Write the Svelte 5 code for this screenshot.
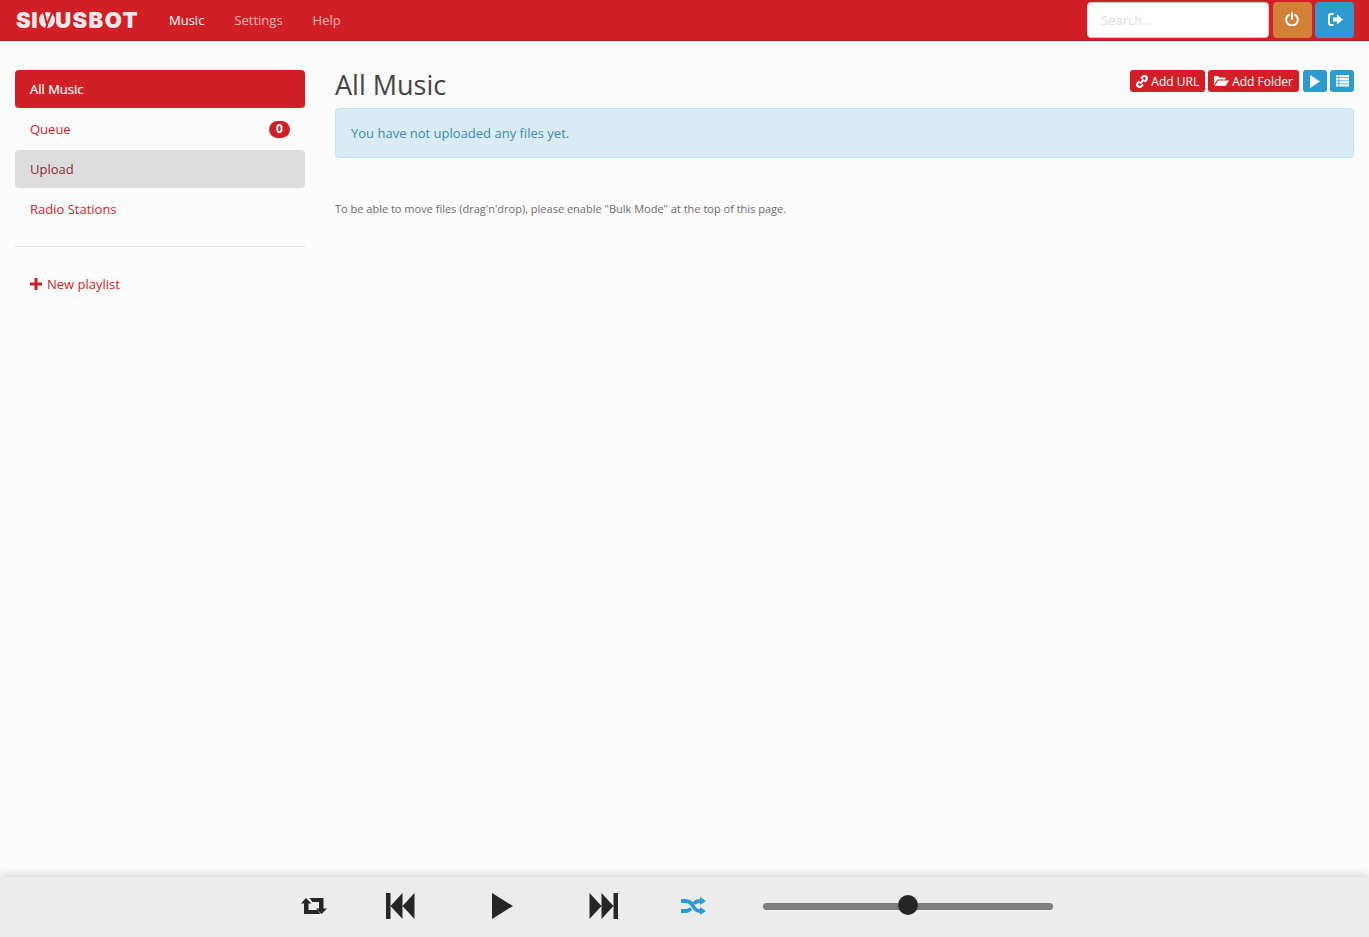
<script>
  const nav = ['Music', 'Settings', 'Help'];
</script>

<div class="page">
  <header class="navbar">
    <div class="logo"><span>SI</span><svg class="logo-n" width="16" height="16" viewBox="0 0 16 16" aria-hidden="true"><circle cx="8" cy="8" r="8" fill="#f8e8e9"/><path d="M4.500 -1 8 12.500 11.500 4.500 13.500 -1" fill="none" stroke="#d21f26" stroke-width="2"/><path d="M8 12.500 7 17" fill="none" stroke="#d21f26" stroke-width="2"/></svg><span class="rest">USBOT</span></div>
    <nav class="links">
      {#each nav as item, i}
        <span class:active={i === 0}>{item}</span>
      {/each}
    </nav>
    <div class="nav-right">
      <input class="search" placeholder="Search..." />
      <button class="nb orange" aria-label="Power">
        <svg class="ico-power" width="14" height="14" viewBox="0 0 14 14"><path d="M4 2.700A5.800 5.800 0 1 0 10 2.700" fill="none" stroke="#fff" stroke-width="2" stroke-linecap="round"/><path d="M7 1v6" stroke="#fff" stroke-width="2" stroke-linecap="round"/></svg>
      </button>
      <button class="nb blue" aria-label="Logout">
        <svg class="ico-out" width="15" height="13" viewBox="0 0 15 13"><path d="M5.500 1H3a2 2 0 0 0-2 2v7a2 2 0 0 0 2 2h2.500" fill="none" stroke="#fff" stroke-width="2"/><path d="M5 4.500H9V1.500l6 5-6 5V8.500H5z" fill="#fff"/></svg>
      </button>
    </div>
  </header>

  <div class="body">
    <aside class="side">
      <a class="item on">All Music</a>
      <a class="item">Queue <b class="badge">0</b></a>
      <a class="item hover">Upload</a>
      <a class="item">Radio Stations</a>
      <hr />
      <a class="new">
        <svg width="12" height="12" viewBox="0 0 12 12"><path d="M4.500 0h3v4.500H12v3H7.500V12h-3V7.500H0v-3h4.500z" fill="#d21f26"/></svg>
        New playlist
      </a>
    </aside>
    <main class="main">
      <div class="head">
        <h1>All Music</h1>
        <div class="tools">
          <button class="sb red">
            <svg width="12" height="13" viewBox="0 0 12 13"><path d="M5 3.500 6.800 1.700a2.300 2.300 0 0 1 3.400 3.300L8.500 6.700M7 9.500 5.200 11.300A2.300 2.300 0 0 1 1.800 8L3.500 6.300M4.300 8.700 7.700 4.300" fill="none" stroke="#fff" stroke-width="2.100"/></svg>
            Add URL
          </button>
          <button class="sb red">
            <svg width="15" height="12" viewBox="0 0 15 12"><path d="M0 10V2a1 1 0 0 1 1-1h3l1 1.500h5.500a1 1 0 0 1 1 1V4.500H3.500L0 10z" fill="#fff"/><path d="M4 5.500h11L11.500 11H.8z" fill="#fff"/></svg>
            Add Folder
          </button>
          <button class="sq blue first" aria-label="Play">
            <svg width="10" height="13" viewBox="0 0 10 13"><path d="M0 0l10 6.500L0 13z" fill="#fff"/></svg>
          </button>
          <button class="sq blue" aria-label="List">
            <svg width="13" height="12" viewBox="0 0 13 12"><path d="M0 0h2.500v2.300H0zM3.300 0H13v2.300H3.300zM0 3.100h2.500v2.300H0zM3.300 3.100H13v2.300H3.300zM0 6.200h2.500v2.300H0zM3.300 6.200H13v2.300H3.300zM0 9.300h2.500v2.300H0zM3.300 9.300H13v2.300H3.300z" fill="#fff"/></svg>
          </button>
        </div>
      </div>
      <div class="alert">You have not uploaded any files yet.</div>
      <p class="hint">To be able to move files (drag'n'drop), please enable "Bulk Mode" at the top of this page.</p>
    </main>
  </div>

  <footer class="player">
    <svg class="repeat" width="26" height="16" viewBox="0 0 26 16" aria-hidden="true"><path d="M5 0 10.500 5.500H7.500V12H16.500L19.500 16H3V5.500H0z" fill="#262626"/><path d="M8.500 0H22.500V10.500H26L20.500 16 15 10.500H18V4H11.500z" fill="#262626"/></svg>
    <svg class="prev" width="29" height="26" viewBox="0 0 29 26" aria-hidden="true"><path d="M0 0h4.500v26H0zM4.500 13 16.500 0v26zM16.500 13 28.500 0v26z" fill="#262626"/></svg>
    <svg class="play" width="21" height="26" viewBox="0 0 21 26" aria-hidden="true"><path d="M0 0l21 13L0 26z" fill="#262626"/></svg>
    <svg class="next" width="29" height="26" viewBox="0 0 29 26" aria-hidden="true"><path d="M29 0h-4.500v26H29zM24.500 13 12.500 0v26zM12.500 13 .5 0v26z" fill="#262626"/></svg>
    <svg class="shuffle" width="25" height="18" viewBox="0 0 25 18" aria-hidden="true"><path d="M0 4h4.500c4 0 6 2 7.500 5s3.500 5 7 5M0 14h4.500c2.500 0 4-1 5.300-2.700M19 4c-3 0-4.700 1-6 2.700" fill="none" stroke="#2d9ad0" stroke-width="3.800"/><path d="M19 0l6 4-6 4zM19 10l6 4-6 4z" fill="#2d9ad0"/></svg>
    <div class="slider"><span class="knob"></span></div>
  </footer>
</div>

<style>
  :global(body) {
    margin: 0;
    background: #fcfcfc;
    font-family: "Open Sans", "Noto Sans", sans-serif;
    font-size: 13px;
    color: #444;
  }
  .page {
    height: 937px;
    display: flex;
    flex-direction: column;
    overflow: hidden;
  }
  .navbar {
    height: 40px;
    flex: none;
    background: #d21f26;
    border-bottom: 1px solid #b51c21;
    display: flex;
    align-items: center;
    padding: 0 15px 0 16px;
  }
  .logo {
    display: flex;
    align-items: center;
    width: 153px;
    font-family: Inter, "Open Sans", sans-serif;
    font-weight: 900;
    font-size: 22px;
    letter-spacing: 0.6px;
    color: #f8e8e9;
    line-height: 20px;
  }
  .logo-n { margin: 0 0 0 1px; }
  .rest { letter-spacing: 1.4px; }
  .links { display: flex; gap: 30px; }
  .links span { color: #f0b3b5; }
  .links span.active { color: #fff; }
  .nav-right {
    margin-left: auto;
    display: flex;
    align-items: center;
    gap: 3px;
  }
  .search {
    width: 182px;
    height: 36px;
    box-sizing: border-box;
    border: 1px solid #ccc;
    border-radius: 4px;
    padding: 0 13px;
    margin-right: 1px;
    font: inherit;
    background: #fff;
  }
  .search::placeholder { color: #dcdcdc; opacity: 1; }
  button {
    border: 0;
    padding: 0;
    font: inherit;
    color: #fff;
    display: inline-flex;
    align-items: center;
    justify-content: center;
  }
  .nb { width: 39px; height: 36px; border-radius: 4px; }
  .ico-power { margin: 0 2px 2px 0; }
  .ico-out { margin: 0 0 2px 1px; }
  .orange { background: #d28037; }
  .blue { background: #2d9ad0; }
  .red { background: #d21f26; }
  .body { flex: 1; display: flex; min-height: 0; padding: 29px 15px 0; gap: 30px; }
  .side { width: 290px; flex: none; display: flex; flex-direction: column; gap: 2px; }
  .item {
    height: 38px;
    box-sizing: border-box;
    padding: 0 15px;
    border-radius: 4px;
    display: flex;
    align-items: center;
    justify-content: space-between;
    color: #d21f26;
  }
  .item.on { background: #d21f26; color: #fff; -webkit-text-stroke: 0.2px #fff; }
  .item.hover { background: #dcdcdc; color: #8e2a30; }
  .badge {
    background: #d21f26;
    color: #fff;
    font-size: 12px;
    font-weight: 700;
    border-radius: 9px;
    width: 21px;
    height: 17px;
    line-height: 16px;
    text-align: center;
  }
  hr { width: 100%; margin: 16px 0 0; border: 0; border-top: 1px solid #dcdcdc; }
  .new {
    margin-top: 26px;
    padding-left: 15px;
    display: flex;
    align-items: center;
    gap: 5px;
    color: #d21f26;
    line-height: 18px;
  }
  .main { flex: 1; min-width: 0; }
  .head { height: 38px; display: flex; justify-content: space-between; align-items: flex-start; }
  h1 {
    margin: -2px 0 0;
    font-size: 27px;
    font-weight: 400;
    line-height: 34px;
    color: #444;
  }
  .tools { display: flex; gap: 3px; }
  .sb {
    height: 22px;
    padding: 0 6px;
    border-radius: 3px;
    gap: 3px;
    font-size: 12px;
  }
  .sq { width: 24px; height: 22px; border-radius: 3px; }
  .sq.first { margin-left: 1px; }
  .alert {
    height: 50px;
    box-sizing: border-box;
    background: #d9ebf5;
    border: 1px solid #bce4f2;
    border-radius: 4px;
    padding: 0 15px;
    display: flex;
    align-items: center;
    color: #4189ad;
  }
  .hint { margin: 43px 0 0; font-size: 11px; line-height: 15px; color: #6b6b6b; }
  .player {
    height: 60px;
    flex: none;
    box-sizing: border-box;
    padding-bottom: 2px;
    background: #ececec;
    box-shadow: 0 -3px 8px rgba(0, 0, 0, 0.14);
    display: flex;
    align-items: center;
  }
  .repeat { margin-left: 301px; }
  .prev { margin-left: 59px; }
  .play { margin-left: 77px; }
  .next { margin-left: 75.5px; }
  .shuffle { margin-left: 63.5px; }
  .slider {
    margin-left: 57px;
    width: 290px;
    height: 7px;
    border-radius: 4px;
    background: #7e7e7e;
    position: relative;
  }
  .knob {
    position: absolute;
    left: 135px;
    top: -8px;
    width: 20px;
    height: 20px;
    border-radius: 50%;
    background: #262626;
  }
</style>
